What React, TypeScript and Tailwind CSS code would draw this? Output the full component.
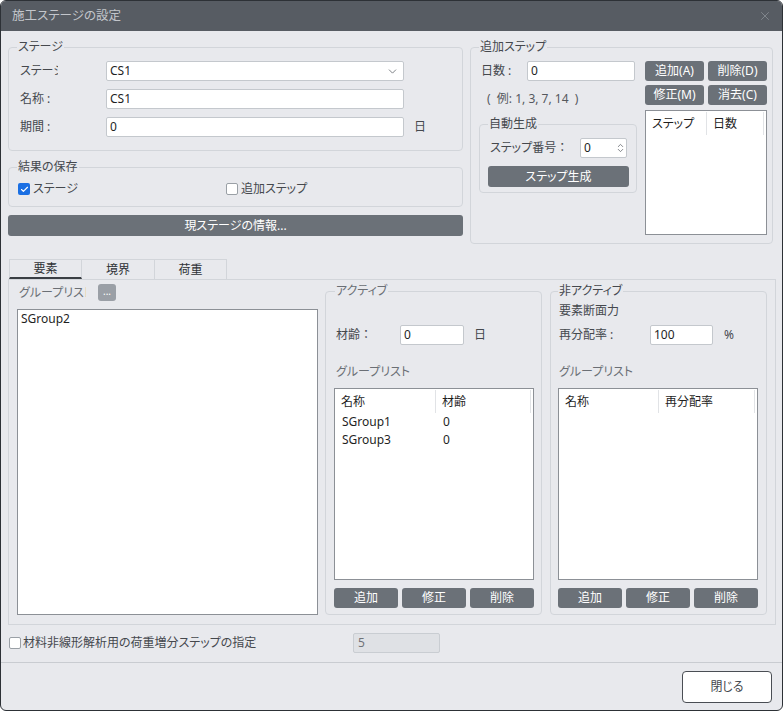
import React from 'react';
import { ChevronDown, ChevronUp, X, Check } from 'lucide-react';

type P = { children?: React.ReactNode; className?: string };

function Group({ legend, className = '', legendClass = 'text-[#45484d] ml-[8px]', children }: P & { legend: string; legendClass?: string }) {
  return (
    <fieldset className={`border border-[#d2d5da] rounded-[4px] min-w-0 ${className}`}>
      <legend className={`px-[1px] text-[12px] leading-[16px] ${legendClass}`}>{legend}</legend>
      {children}
    </fieldset>
  );
}

function Btn({ children, className = '' }: P) {
  return (
    <div className={`h-[20px] rounded-[3px] bg-[#6b7178] text-white text-[12px] leading-[16px] flex items-center justify-center ${className}`}>
      {children}
    </div>
  );
}

function Input({ value, className = '' }: { value: string; className?: string }) {
  return (
    <div className={`h-[20px] bg-white border border-[#c4c8cd] rounded-[2px] pl-[3px] flex items-center text-[12px] text-[#1f1f1f] ${className}`}>
      {value}
    </div>
  );
}

function Box({ checked }: { checked?: boolean }) {
  return checked ? (
    <div className="w-[12px] h-[12px] rounded-[2px] bg-[#1a6fe3] flex items-center justify-center">
      <Check size={9} strokeWidth={3} color="#ffffff" />
    </div>
  ) : (
    <div className="w-[12px] h-[12px] rounded-[2px] bg-white border border-[#9aa0a6]" />
  );
}

function ListPanel({ c1, c2, w1, rows, className = '' }: { c1: string; c2: string; w1: string; rows: [string, string][]; className?: string }) {
  return (
    <div className={`bg-white border border-[#8c9096] text-[12px] text-[#1f1f1f] ${className}`}>
      <div className="flex h-[24px] pt-[1px]">
        <div className={`${w1} pl-[6px] flex items-center border-r border-[#e1e3e6]`}>{c1}</div>
        <div className="flex-1 pl-[6px] flex items-center border-r border-[#e1e3e6] mr-[2px]">{c2}</div>
      </div>
      {rows.map(([a, b]) => (
        <div key={a} className="flex h-[18px] items-center">
          <div className={`${w1} pl-[7px]`}>{a}</div>
          <div className="flex-1 pl-[7px]">{b}</div>
        </div>
      ))}
    </div>
  );
}

export default function App() {
  return (
    <div className="w-[783px] h-[711px] border border-[#2d3136] rounded-[6px] overflow-hidden bg-[#e8e9ed] flex flex-col [font-family:'Noto_Sans','Noto_Sans_CJK_JP',sans-serif] [font-feature-settings:'palt'] text-[12px] leading-[16px] text-[#45484d]">
      {/* title bar */}
      <div className="h-[30px] shrink-0 bg-[#575c63] flex items-center justify-between pl-[11px] pr-[10px]">
        <span className="text-[12.5px] text-[#c3c6cb]">施工ステージの設定</span>
        <X size={14} strokeWidth={1.3} color="#8d9299" />
      </div>

      {/* body */}
      <div className="flex-1 flex flex-col pl-[7px] pt-[8px]">
        {/* top row */}
        <div className="flex items-start gap-[7px]">
          {/* left column */}
          <div className="w-[455px] flex flex-col">
            <Group legend="ステージ" className="w-full">
              <div className="flex flex-col gap-[8px] pt-[6px] pb-[13px] pl-[11px]">
                <div className="flex items-center h-[20px]">
                  <span className="w-[38px] overflow-hidden whitespace-nowrap">ステージ</span>
                  <div className="w-[48px]" />
                  <div className="w-[298px] h-[20px] bg-white border border-[#c4c8cd] rounded-[2px] pl-[3px] pr-[4px] flex items-center justify-between text-[#1f1f1f]">
                    <span>CS1</span>
                    <ChevronDown size={13} strokeWidth={1.6} color="#6b6f75" />
                  </div>
                </div>
                <div className="flex items-center h-[20px]">
                  <span className="w-[86px]">名称 :</span>
                  <Input value="CS1" className="w-[298px]" />
                </div>
                <div className="flex items-center h-[20px]">
                  <span className="w-[86px]">期間 :</span>
                  <Input value="0" className="w-[298px]" />
                  <span className="ml-[10px]">日</span>
                </div>
              </div>
            </Group>

            <Group legend="結果の保存" className="w-full mt-[8px]">
              <div className="flex items-center h-[16px] mt-[6px] mb-[9px] pl-[9px]">
                <Box checked />
                <span className="ml-[3px] w-[193px]">ステージ</span>
                <Box />
                <span className="ml-[3px]">追加ステップ</span>
              </div>
            </Group>

            <Btn className="mt-[8px] h-[21px] w-full">現ステージの情報...</Btn>
          </div>

          {/* right fieldset */}
          <Group legend="追加ステップ" className="w-[303px]">
            <div className="flex pl-[8px] pt-[6px] pr-[4px] pb-[8px] gap-[8px]">
              <div className="w-[158px] flex flex-col">
                <div className="flex items-center h-[20px] pl-[2px]">
                  <span className="w-[46px]">日数 :</span>
                  <Input value="0" className="w-[108px]" />
                </div>
                <div className="h-[16px] mt-[10px] pl-[8px] text-[#55585d]">(&nbsp;&nbsp;例: 1, 3, 7, 14&nbsp;&nbsp;)</div>
                <Group legend="自動生成" className="w-[158px] mt-[9px]">
                  <div className="pt-[6px] pb-[5px] pl-[8px]">
                    <div className="flex items-center h-[20px] pl-[2px]">
                      <span className="w-[90px]">ステップ番号 ：</span>
                      <div className="w-[47px] h-[20px] bg-white border border-[#c4c8cd] rounded-[2px] pl-[3px] pr-[1px] flex items-center justify-between text-[#1f1f1f]">
                        <span>0</span>
                        <div className="flex flex-col items-center -space-y-[4px]">
                          <ChevronUp size={9} strokeWidth={2.2} color="#6b6f75" />
                          <ChevronDown size={9} strokeWidth={2.2} color="#6b6f75" />
                        </div>
                      </div>
                    </div>
                    <Btn className="mt-[8px] h-[21px] w-[141px]">ステップ生成</Btn>
                  </div>
                </Group>
              </div>

              <div className="w-[122px] flex flex-col">
                <div className="grid grid-cols-2 gap-[4px]">
                  <Btn>追加(A)</Btn>
                  <Btn>削除(D)</Btn>
                  <Btn>修正(M)</Btn>
                  <Btn>消去(C)</Btn>
                </div>
                <ListPanel c1="ステップ" c2="日数" w1="w-[61px]" rows={[]} className="mt-[5px] h-[125px]" />
              </div>
            </div>
          </Group>
        </div>

        {/* tabs */}
        <div className="flex mt-[15px] ml-[1px] h-[20px] text-[#2f3236]">
          <div className="w-[73px] flex items-center justify-center border-t border-l border-r border-[#d2d5da] border-b-2 border-b-[#3a3e44]">要素</div>
          <div className="w-[73px] flex items-center justify-center border-t border-r border-[#d2d5da]">境界</div>
          <div className="w-[72px] flex items-center justify-center border-t border-r border-[#d2d5da]">荷重</div>
        </div>

        {/* tab panel */}
        <div className="w-[768px] border border-[#d2d5da] flex items-start pl-[8px] pt-[3px] pb-[9px]">
          <div className="w-[301px] flex flex-col mt-[1px]">
            <div className="flex items-center h-[17px]">
              <span className="ml-[2px] w-[67px] overflow-hidden whitespace-nowrap text-[#6b6f75]">グループリスト</span>
              <div className="ml-[12px] w-[18px] h-[17px] rounded-[3px] bg-[#9a9fa6] text-white text-[10px] flex items-center justify-center leading-none pb-[3px]">...</div>
            </div>
            <div className="mt-[8px] h-[306px] bg-white border border-[#8c9096] pl-[3px] pt-[1px] text-[#1f1f1f]">SGroup2</div>
          </div>

          <Group legend="アクティブ" className="w-[217px] ml-[7px]" legendClass="text-[#6b6f75] ml-[9px]">
            <div className="pl-[8px] pr-[7px] pt-[26px] pb-[6px]">
              <div className="flex items-center h-[20px] pl-[2px]">
                <span className="w-[64px]">材齢 ：</span>
                <Input value="0" className="w-[64px]" />
                <span className="ml-[10px]">日</span>
              </div>
              <div className="h-[16px] mt-[19px] pl-[2px] text-[#6b6f75]">グループリスト</div>
              <ListPanel c1="名称" c2="材齢" w1="w-[101px]" rows={[["SGroup1", "0"], ["SGroup3", "0"]]} className="mt-[8px] h-[192px] w-[200px]" />
              <div className="grid grid-cols-3 gap-[4px] mt-[8px] w-[200px]">
                <Btn>追加</Btn>
                <Btn>修正</Btn>
                <Btn>削除</Btn>
              </div>
            </div>
          </Group>

          <Group legend="非アクティブ" className="w-[217px] ml-[8px]" legendClass="text-[#45484d] ml-[7px]">
            <div className="pl-[7px] pr-[8px] pt-[4px] pb-[6px]">
              <div className="h-[16px] pl-[1px]">要素断面力</div>
              <div className="flex items-center h-[20px] pl-[1px] mt-[6px]">
                <span className="w-[91px]">再分配率 :</span>
                <Input value="100" className="w-[63px]" />
                <span className="ml-[11px]">%</span>
              </div>
              <div className="h-[16px] mt-[19px] pl-[1px] text-[#6b6f75]">グループリスト</div>
              <ListPanel c1="名称" c2="再分配率" w1="w-[100px]" rows={[]} className="mt-[8px] h-[192px] w-[200px]" />
              <div className="grid grid-cols-3 gap-[4px] mt-[8px] w-[200px]">
                <Btn>追加</Btn>
                <Btn>修正</Btn>
                <Btn>削除</Btn>
              </div>
            </div>
          </Group>
        </div>

        {/* bottom option */}
        <div className="flex items-center h-[20px] mt-[8px] ml-[1px]">
          <Box />
          <span className="ml-[2px] w-[330px]">材料非線形解析用の荷重増分ステップの指定</span>
          <div className="w-[87px] h-[20px] bg-[#dfe1e5] border border-[#c9cdd2] rounded-[2px] pl-[4px] flex items-center text-[#707378]">5</div>
        </div>
      </div>

      {/* footer */}
      <div className="shrink-0 border-t border-[#c9ccd1] h-[48px] flex items-start justify-end pr-[10px] pt-[8px] mt-[9px]">
        <div className="w-[90px] h-[32px] bg-white border border-[#4a4e54] rounded-[4px] flex items-center justify-center text-[#45484d]">閉じる</div>
      </div>
    </div>
  );
}
